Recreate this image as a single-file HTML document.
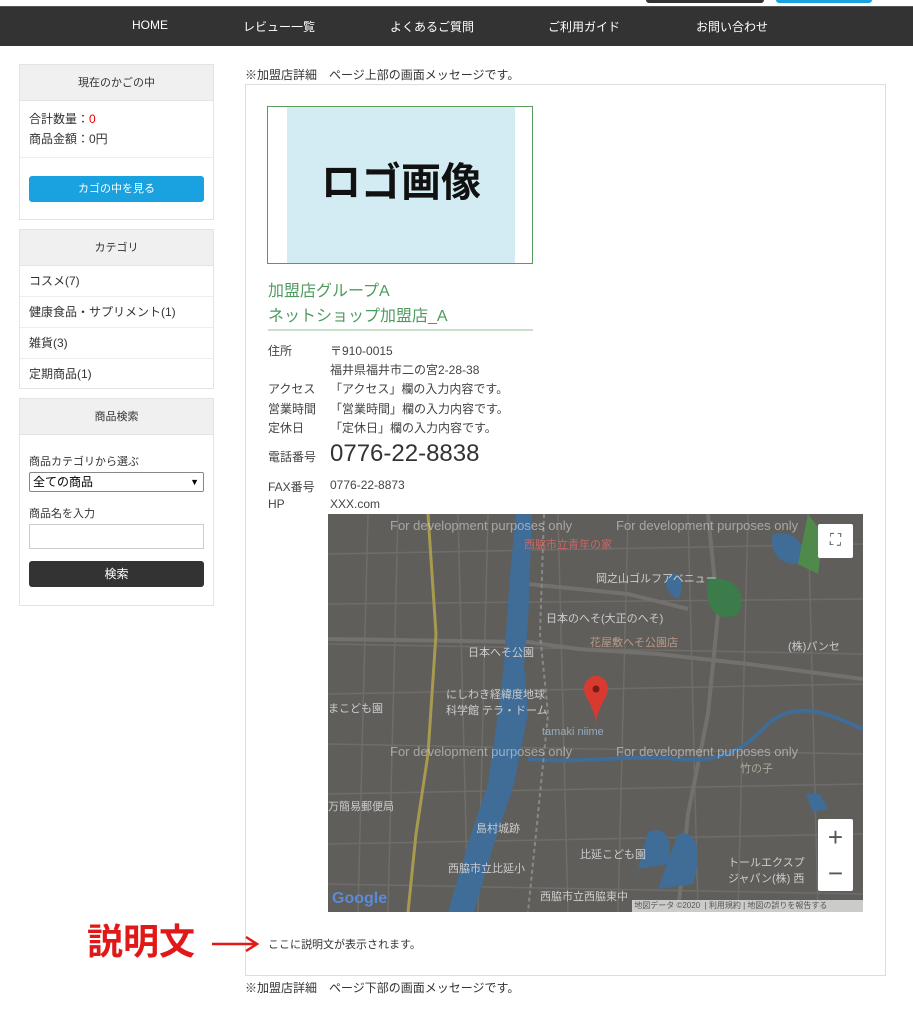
<!DOCTYPE html>
<html><head><meta charset="utf-8"><style>
*{margin:0;padding:0;box-sizing:border-box}
body{width:913px;height:1024px;background:#fff;font-family:"Liberation Sans","Noto Sans CJK JP",sans-serif;color:#333;font-size:12px;position:relative;overflow:hidden}
.nav{position:absolute;top:6px;left:0;width:913px;height:40px;background:#333;border-top:1px solid #555}
.nav span{position:absolute;top:11px;color:#fff;font-size:12px}
.box{position:absolute;left:19px;width:195px;border:1px solid #e3e3e3;background:#fff}
.hd{background:#f0f0f0;height:36px;line-height:36px;text-align:center;font-size:11px;color:#333;border-bottom:1px solid #e3e3e3}
.abs{position:absolute}
.cat div{height:31px;line-height:31px;padding-left:9px;border-bottom:1px solid #eee;font-size:12px}
.lbl{position:absolute;left:268px;font-size:12px;color:#444}
.val{position:absolute;left:330px;font-size:12px;color:#444}
.wm{position:absolute;color:rgba(255,255,255,.45);font-size:13px;white-space:nowrap}
.ml{position:absolute;color:#ccc;font-size:11px;white-space:nowrap}
</style></head><body>
<div class="abs" style="left:646px;top:0;width:118px;height:3px;background:#333;border-radius:0 0 3px 3px"></div>
<div class="abs" style="left:776px;top:0;width:96px;height:3px;background:#1aa1e0;border-radius:0 0 3px 3px"></div>
<div class="nav">
<span style="left:132px">HOME</span><span style="left:243px">レビュー一覧</span><span style="left:390px">よくあるご質問</span><span style="left:548px">ご利用ガイド</span><span style="left:696px">お問い合わせ</span>
</div>

<div class="box" style="top:64px;height:156px">
<div class="hd">現在のかごの中</div>
<div class="abs" style="left:9px;top:44px;line-height:20px">合計数量：<span style="color:#e00">0</span><br>商品金額：0円</div>
<div class="abs" style="left:0;top:92px;width:193px;border-top:1px solid #eee"></div>
<div class="abs" style="left:9px;top:111px;width:175px;height:26px;background:#1aa1e0;color:#fff;text-align:center;line-height:26px;border-radius:3px;font-size:11px">カゴの中を見る</div>
</div>

<div class="box" style="top:229px;height:160px">
<div class="hd">カテゴリ</div>
<div class="cat"><div>コスメ(7)</div><div>健康食品・サプリメント(1)</div><div>雑貨(3)</div><div style="border:none">定期商品(1)</div></div>
</div>

<div class="box" style="top:398px;height:208px">
<div class="hd">商品検索</div>
<div class="abs" style="left:9px;top:54px;font-size:11px">商品カテゴリから選ぶ</div>
<div class="abs" style="left:9px;top:73px;width:175px;height:20px;border:1px solid #888;border-radius:2px;font-size:12px;line-height:18px;padding-left:3px;color:#000">全ての商品<span style="position:absolute;right:4px;font-size:9px">▼</span></div>
<div class="abs" style="left:9px;top:106px;font-size:11px">商品名を入力</div>
<div class="abs" style="left:9px;top:125px;width:175px;height:25px;border:1px solid #ccc"></div>
<div class="abs" style="left:9px;top:162px;width:175px;height:26px;background:#333;color:#fff;text-align:center;line-height:26px;border-radius:3px;font-size:12px">検索</div>
</div>

<div class="abs" style="left:245px;top:66px;font-size:12px">※加盟店詳細　ページ上部の画面メッセージです。</div>
<div class="abs" style="left:245px;top:84px;width:641px;height:892px;border:1px solid #ddd"></div>
<div class="abs" style="left:267px;top:106px;width:266px;height:158px;border:1px solid #5a9a5a;background:#fff">
<div class="abs" style="left:19px;top:0;width:228px;height:156px;background:#d3ecf3;text-align:center;line-height:152px;font-size:40px;font-weight:bold;color:#111">ロゴ画像</div>
</div>
<div class="abs" style="left:268px;top:279px;color:#4f9b5f;font-size:16px;line-height:25px">加盟店グループA<br>ネットショップ加盟店_A</div>
<div class="abs" style="left:268px;top:329px;width:265px;border-top:2px solid #c8dfcc"></div>
<div class="lbl" style="top:342px">住所</div><div class="val" style="top:342px">〒910-0015</div>
<div class="val" style="top:361px">福井県福井市二の宮2-28-38</div>
<div class="lbl" style="top:380px">アクセス</div><div class="val" style="top:380px">「アクセス」欄の入力内容です。</div>
<div class="lbl" style="top:400px">営業時間</div><div class="val" style="top:400px">「営業時間」欄の入力内容です。</div>
<div class="lbl" style="top:419px">定休日</div><div class="val" style="top:419px">「定休日」欄の入力内容です。</div>
<div class="lbl" style="top:448px">電話番号</div><div class="val" style="top:440px;font-size:24px;color:#333">0776-22-8838</div>
<div class="lbl" style="top:478px">FAX番号</div><div class="val" style="top:478px">0776-22-8873</div>
<div class="lbl" style="top:497px">HP</div><div class="val" style="top:497px">XXX.com</div>

<div class="abs" style="left:328px;top:514px;width:535px;height:398px;background:#5f5e5b;overflow:hidden">
<svg width="535" height="398" style="position:absolute;left:0;top:0">
<g stroke="#6e6d6a" stroke-width="1.5" fill="none">
<path d="M0 40 L535 30 M0 90 L535 85 M0 130 L535 140 M0 180 L535 170 M0 230 L535 240 M0 280 L535 270 M0 330 L535 320 M0 370 L535 380"/>
<path d="M40 0 L30 398 M70 0 L60 398 M130 0 L140 398 M160 0 L150 398 M230 0 L240 398 M300 0 L290 398 M360 0 L370 398 M420 0 L410 398 M480 0 L490 398"/>
</g>
<g stroke="#72716d" stroke-width="4" fill="none">
<path d="M0 125 L200 128 L250 135 L330 140 L420 150 L535 165"/>
<path d="M380 0 L390 100 L380 200 L360 300 L350 398"/>
<path d="M200 70 L300 80 L360 95"/>
</g>
<path d="M100 0 L108 120 L100 240 L88 320 L80 398" stroke="#a79a4f" stroke-width="3" fill="none"/>
<path d="M188 0 L204 0 L200 110 L196 150 L200 200 L186 270 L166 330 L146 398 L120 398 L140 330 L160 270 L170 200 L176 150 L182 60 Z" fill="#3f6d98"/>
<path d="M200 245 C260 250 300 240 350 245 C400 250 420 230 440 210 C470 185 500 200 535 215" stroke="#3f6d98" stroke-width="4" fill="none"/>
<path d="M216 0 L212 120 L220 200 L210 300 L200 398" stroke="#888" stroke-width="2" stroke-dasharray="4 3" fill="none"/>
<path d="M340 60 C350 55 360 70 350 85 C340 80 335 70 340 60Z" fill="#3f6d98"/>
<path d="M380 65 C410 60 420 85 410 100 C390 110 375 95 380 65Z" fill="#3c7b4a"/>
<path d="M445 20 C470 15 480 35 470 50 C455 52 440 40 445 20Z" fill="#3f6d98"/>
<path d="M480 0 L495 20 L490 60 L470 50 Z" fill="#4f8a4a"/>
<path d="M320 318 C340 310 345 330 340 350 L310 355 Z" fill="#3f6d98"/>
<path d="M350 320 C370 315 375 340 365 370 L330 375 Z" fill="#3f6d98"/>
<path d="M478 280 L492 280 L500 295 L485 298 Z" fill="#3f6d98"/>
<path d="M256 175 C256 167 262 162 268 162 C274 162 280 167 280 175 C280 184 268 194 268 212 C268 194 256 184 256 175Z" fill="#d93a30"/>
<circle cx="268" cy="175" r="3.5" fill="#7a1a14"/>
</svg>
<div class="wm" style="left:62px;top:4px">For development purposes only</div>
<div class="wm" style="left:288px;top:4px">For development purposes only</div>
<div class="wm" style="left:-28px;top:230px">only</div>
<div class="wm" style="left:62px;top:230px">For development purposes only</div>
<div class="wm" style="left:288px;top:230px">For development purposes only</div>
<div class="wm" style="left:-28px;top:4px">only</div>
<div class="ml" style="left:196px;top:22px;color:#c66">西脇市立青年の家</div>
<div class="ml" style="left:268px;top:56px">岡之山ゴルフアベニュー</div>
<div class="ml" style="left:218px;top:96px">日本のへそ(大正のへそ)</div>
<div class="ml" style="left:262px;top:120px;color:#b98">花屋敷へそ公園店</div>
<div class="ml" style="left:140px;top:130px">日本へそ公園</div>
<div class="ml" style="left:460px;top:124px">(株)パンセ</div>
<div class="ml" style="left:118px;top:172px">にしわき経緯度地球<br>科学館 テラ・ドーム</div>
<div class="ml" style="left:0;top:186px">まこども園</div>
<div class="ml" style="left:214px;top:212px;color:#9ab">tamaki niime</div>
<div class="ml" style="left:412px;top:246px;color:#aa9">竹の子</div>
<div class="ml" style="left:0;top:284px">万簡易郵便局</div>
<div class="ml" style="left:148px;top:306px">島村城跡</div>
<div class="ml" style="left:252px;top:332px">比延こども園</div>
<div class="ml" style="left:120px;top:346px">西脇市立比延小</div>
<div class="ml" style="left:400px;top:340px">トールエクスプ<br>ジャパン(株) 西</div>
<div class="ml" style="left:212px;top:374px">西脇市立西脇東中</div>
<div class="abs" style="left:490px;top:10px;width:35px;height:34px;background:#fff;border-radius:2px;text-align:center;line-height:34px;color:#555;font-size:16px">⛶</div>
<div class="abs" style="left:490px;top:305px;width:35px;height:72px;background:#fff;border-radius:2px;color:#555;font-size:26px;text-align:center;line-height:36px">+<br>−</div>
<div class="abs" style="left:4px;top:376px;font-size:16px;font-weight:bold;color:#5a8ad8">Google</div>
<div class="abs" style="left:304px;top:386px;width:231px;height:12px;background:rgba(230,230,230,.8);font-size:8px;color:#555;line-height:12px;white-space:nowrap">&nbsp;地図データ ©2020 &nbsp;| 利用規約 | 地図の誤りを報告する</div>
</div>

<div class="abs" style="left:87px;top:922px;color:#e01818;font-size:36px;font-weight:bold;line-height:40px">説明文</div>
<svg class="abs" style="left:212px;top:932px" width="48" height="24"><path d="M0 12 H44 M34 5 L45 12 L34 19" stroke="#e01818" stroke-width="2.5" fill="none"/></svg>
<div class="abs" style="left:268px;top:936px;font-size:11px">ここに説明文が表示されます。</div>
<div class="abs" style="left:245px;top:979px;font-size:12px">※加盟店詳細　ページ下部の画面メッセージです。</div>
</body></html>
